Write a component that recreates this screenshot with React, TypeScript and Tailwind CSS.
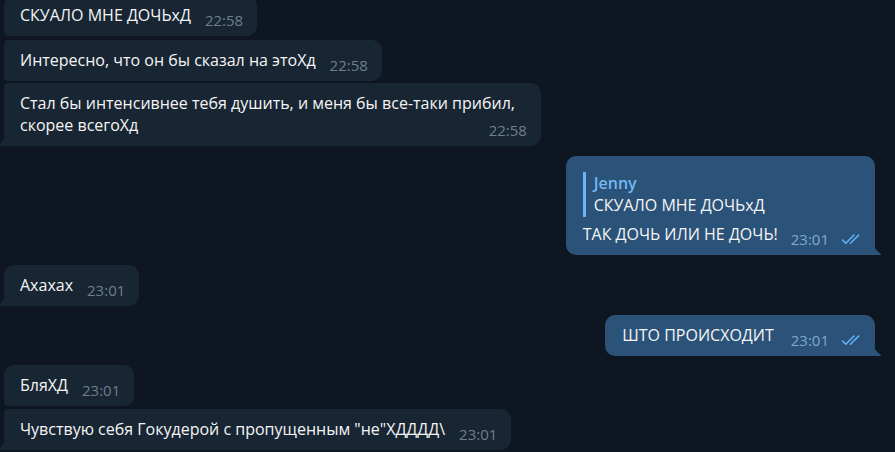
import React from "react";

type Corners = string;

const DoubleCheck = () => (
  <svg width="22" height="12" viewBox="0 0 22 12" fill="none" stroke="currentColor" strokeWidth="1.6" strokeLinecap="round" strokeLinejoin="round">
    <path d="M1.5 7 L4.8 10.3 L13 2" />
    <path d="M9.5 10.3 L17.7 2" />
  </svg>
);

const TailLeft = () => (
  <svg className="absolute bottom-0 -left-[6px]" width="7" height="12" viewBox="0 0 7 12">
    <path d="M7 0 L7 12 L1 12 C0 12 -0.2 11.2 0.6 10.6 C4 8 7 5 7 0 Z" fill="#182533" />
  </svg>
);

const TailRight = () => (
  <svg className="absolute bottom-0 -right-[6px]" width="7" height="12" viewBox="0 0 7 12">
    <path d="M0 0 L0 12 L6 12 C7 12 7.2 11.2 6.4 10.6 C3 8 0 5 0 0 Z" fill="#2b5278" />
  </svg>
);

function Incoming({ time, children, corners, tail, stacked, className = "" }: { time: string; children: React.ReactNode; corners: Corners; tail?: boolean; stacked?: boolean; className?: string }) {
  // stacked: the time sits under the last line, right aligned, when the first line is the widest
  if (stacked) {
    return (
      <div className={`relative w-fit ml-[4px] bg-[#182533] ${corners} pl-4 pr-[14px] pt-[9px] pb-[5px] flex flex-col ${className}`}>
        <div className="pr-[12px] text-[16px] leading-[22px] text-[#f5f5f5]">{children}</div>
        <span className="self-end -mt-[17px] text-[15px] leading-[22px] text-[#6d7f8f]">{time}</span>
        {tail && <TailLeft />}
      </div>
    );
  }
  return (
    <div className={`relative w-fit ml-[4px] bg-[#182533] ${corners} pl-4 pr-[14px] pt-[9px] pb-[10px] flex items-end gap-[14px] ${className}`}>
      <div className="text-[16px] leading-[22px] text-[#f5f5f5]">{children}</div>
      <span className="text-[15px] leading-[22px] text-[#6d7f8f] -mb-[5px]">{time}</span>
      {tail && <TailLeft />}
    </div>
  );
}

function Outgoing({ time, children, reply, gap = "gap-[17px]", className = "" }: { time: string; children: React.ReactNode; reply?: { name: string; text: string }; gap?: string; className?: string }) {
  return (
    <div className={`relative w-fit ml-auto mr-[20px] bg-[#2b5278] rounded-[10px] rounded-br-none pl-[17px] pr-[12px] pt-[9px] pb-[10px] ${className}`}>
      {reply && (
        <div className="mt-[7px] mb-[6px] pb-[1px] border-l-[3px] border-[#6cb4f3] pl-[8px]">
          <div className="text-[16px] leading-[22px] font-semibold text-[#72b8f4]">{reply.name}</div>
          <div className="text-[16px] leading-[22px] text-[#f5f5f5]">{reply.text}</div>
        </div>
      )}
      <div className={`flex items-end ${gap}`}>
        <div className="text-[16px] leading-[22px] text-[#f5f5f5]">{children}</div>
        <div className="flex items-center gap-[12px] -mb-[5px]">
          <span className="text-[15px] leading-[22px] text-[#7da8d3]">{time}</span>
          <span className="text-[#5eb5f7]"><DoubleCheck /></span>
        </div>
      </div>
      <TailRight />
    </div>
  );
}

export default function App() {
  return (
    <div className="h-[452px] overflow-hidden bg-[#0e1621] font-['Open_Sans',sans-serif]">
      <div className="flex flex-col -mt-[5px]">
        <Incoming time="22:58" corners="rounded-[10px] rounded-bl-[4px]">СКУАЛО МНЕ ДОЧЬхД</Incoming>
        <Incoming time="22:58" corners="rounded-[10px] rounded-l-[4px]" className="mt-[4px]">Интересно, что он бы сказал на этоХд</Incoming>
        <Incoming time="22:58" corners="rounded-[10px] rounded-tl-[4px] rounded-bl-none" tail stacked className="mt-[2px]">
          Стал бы интенсивнее тебя душить, и меня бы все-таки прибил,
          <br />
          скорее всегоХд
        </Incoming>

        <Outgoing time="23:01" reply={{ name: "Jenny", text: "СКУАЛО МНЕ ДОЧЬхД" }} gap="gap-[13px]" className="mt-[10px]">
          ТАК ДОЧЬ ИЛИ НЕ ДОЧЬ!
        </Outgoing>

        <Incoming time="23:01" corners="rounded-[10px] rounded-bl-none" tail className="mt-[10px]">Ахахах</Incoming>

        <Outgoing time="23:01" className="mt-[9px]">ШТО ПРОИСХОДИТ</Outgoing>

        <Incoming time="23:01" corners="rounded-[10px] rounded-bl-[4px]" className="mt-[9px]">БляХД</Incoming>
        <Incoming time="23:01" corners="rounded-[10px] rounded-tl-[4px] rounded-bl-none" tail className="mt-[3px]">
          Чувствую себя Гокудерой с пропущенным "не"ХДДДД\
        </Incoming>
      </div>
    </div>
  );
}
